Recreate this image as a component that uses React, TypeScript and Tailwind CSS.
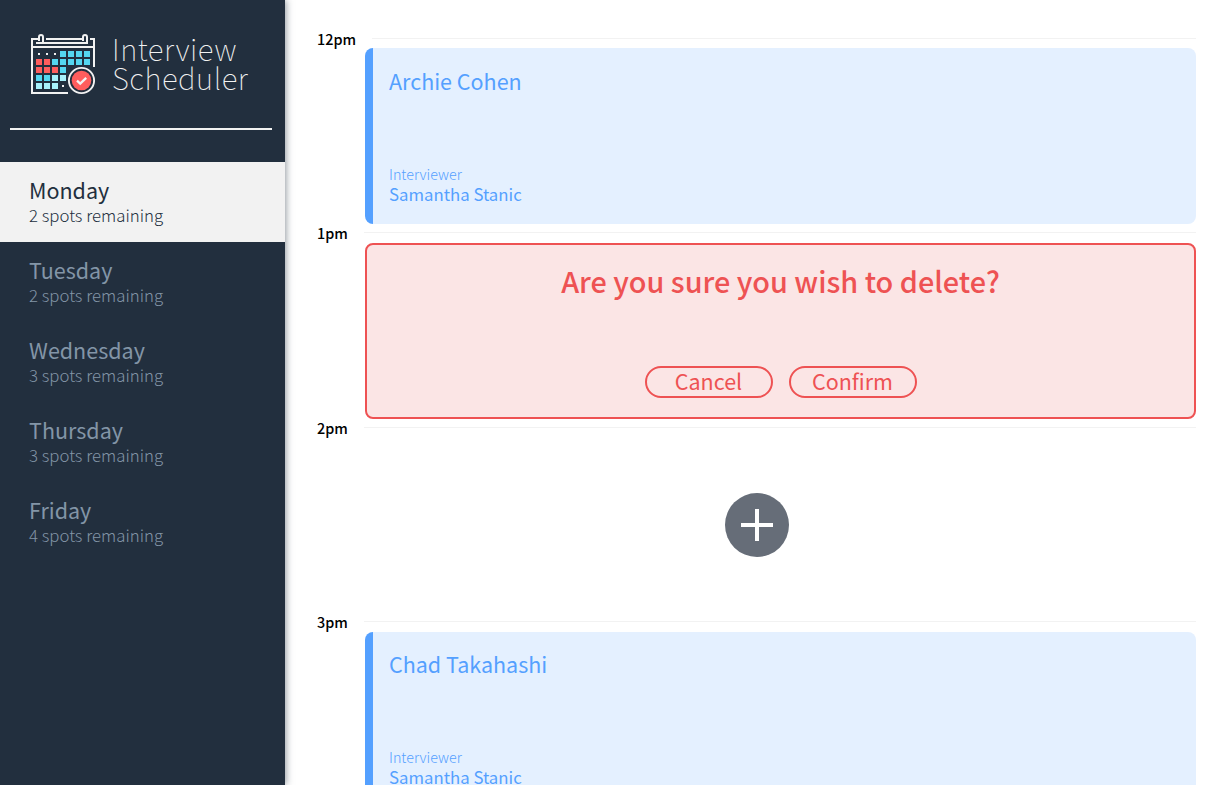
import React from "react";

const days = [
  { name: "Monday", spots: 2 },
  { name: "Tuesday", spots: 2 },
  { name: "Wednesday", spots: 3 },
  { name: "Thursday", spots: 3 },
  { name: "Friday", spots: 4 },
];

const CYAN = "#54d7f0";
const RED = "#ff5d5d";
const PALE = "#a8f1fb";

const cells: [number, number, string][] = [
  [3, 0, CYAN], [4, 0, CYAN], [5, 0, CYAN], [6, 0, CYAN],
  [0, 1, RED], [1, 1, RED], [2, 1, CYAN], [3, 1, CYAN], [4, 1, CYAN], [5, 1, CYAN], [6, 1, CYAN],
  [0, 2, RED], [1, 2, RED], [2, 2, RED], [3, 2, CYAN],
  [0, 3, CYAN], [1, 3, CYAN], [2, 3, PALE], [3, 3, PALE],
  [0, 4, PALE], [1, 4, PALE], [2, 4, PALE],
];

function Logo() {
  return (
    <svg width="66" height="62" viewBox="30 33 66 62" className="block shrink-0">
      <g fill="none" stroke="#f2f2f2" strokeWidth="2">
        <path d="M39 39H32V93H68M94 67V39H90M46 39H83M32 47H94M36 43H88" />
        <path d="M43 43V37a2 2 0 0 0-4 0V41M87 43V37a2 2 0 0 0-4 0V41" />
      </g>
      {cells.map(([c, r, fill]) => (
        <rect key={`${c}-${r}`} x={36 + c * 8} y={51 + r * 8} width="6" height="6" fill={fill} />
      ))}
      <g fill="#f2f2f2">
        <rect x="38" y="53" width="2" height="2" />
        <rect x="46" y="53" width="2" height="2" />
        <rect x="54" y="53" width="2" height="2" />
        <rect x="62" y="85" width="2" height="2" />
      </g>
      <circle cx="81.5" cy="80.5" r="12.6" fill="#222f3e" stroke="#f2f2f2" strokeWidth="1.9" />
      <circle cx="81.5" cy="80.5" r="9.8" fill={RED} />
      <path d="M77 80.6l3.2 3 6-5.8" fill="none" stroke="#f2f2f2" strokeWidth="2.3" />
    </svg>
  );
}

function Sidebar() {
  return (
    <aside className="relative z-10 h-full w-[285px] shrink-0 bg-[#222f3e] shadow-[1px_0_7px_0_rgba(34,47,62,0.5)]">
      <div className="flex h-[128px] pl-[30px] pt-[33px]">
        <Logo />
        <div className="ml-4 mt-px text-[29.5px] font-thin leading-[29px] tracking-[0.55px] text-[#f2f2f2]">
          <div>Interview</div>
          <div>Scheduler</div>
        </div>
      </div>
      <hr className="ml-[10px] h-0 w-[262px] border-0 border-t-2 border-[#f2f2f2]" />
      <nav className="mt-8">
        {days.map((d, i) => (
          <div
            key={d.name}
            className={
              i === 0
                ? "h-20 bg-[#f2f2f2] pl-[29px] pt-[14px] text-[#222f3e]"
                : "h-20 pl-[29px] pt-[14px] text-[#8395a7]"
            }
          >
            <div className="text-[21.5px] font-normal leading-[27px]">{d.name}</div>
            <div className="text-[16.8px] font-light leading-6">{d.spots} spots remaining</div>
          </div>
        ))}
      </nav>
    </aside>
  );
}

function Hour({ label, first }: { label: string; first?: boolean }) {
  return (
    <div className="flex h-[10px]">
      <span className={first ? "w-[55px] text-[14.4px] font-medium leading-[1px]" : "w-[47px] text-[14.4px] font-medium leading-[1px]"}>
        {label}
      </span>
      <div className="h-px flex-1 bg-[#f2f2f2]" />
    </div>
  );
}

function Booked({ student, interviewer, raised }: { student: string; interviewer: string; raised?: boolean }) {
  return (
    <div
      className={`ml-12 flex h-[176px] flex-col justify-between rounded-lg border-l-8 border-[#54a0ff] bg-[#e4f0ff] pl-4 text-[#54a0ff] ${
        raised ? "pb-[21px] pt-4" : "pb-5 pt-[17px]"
      }`}
    >
      <div className="text-[21.5px] leading-8">{student}</div>
      <div>
        <div className="text-[14.3px] font-light leading-5">Interviewer</div>
        <div className="text-[16.8px] leading-5">{interviewer}</div>
      </div>
    </div>
  );
}

function ConfirmDelete() {
  return (
    <div className="ml-12 flex h-[176px] flex-col items-center justify-between rounded-lg border-2 border-[#ee5253] bg-[#fbe5e5] pb-[19px] pt-4 text-[#ee5253]">
      <div className="text-[28.8px] font-medium leading-[40px]">Are you sure you wish to delete?</div>
      <div className="flex gap-4">
        {["Cancel", "Confirm"].map((t) => (
          <button key={t} className="flex h-8 w-32 items-center justify-center rounded-2xl border-2 border-[#ee5253] pb-[2px] text-[21.5px] leading-[26px]">
            {t}
          </button>
        ))}
      </div>
    </div>
  );
}

export default function App() {
  return (
    <div className="flex h-[785px] w-[1226px] overflow-hidden bg-white font-['Noto_Sans_CJK_JP',sans-serif]">
      <Sidebar />
      <main className="flex-1 pl-8 pr-[30px] pt-[38px]">
        <section className="h-[194px]">
          <Hour label="12pm" first />
          <Booked student="Archie Cohen" interviewer="Samantha Stanic" />
        </section>
        <section className="h-[195px]">
          <Hour label="1pm" />
          <div className="pt-px">
            <ConfirmDelete />
          </div>
        </section>
        <section className="h-[194px]">
          <Hour label="2pm" />
          <div className="flex h-[176px] items-center justify-center pl-px">
            <button className="flex size-16 items-center justify-center rounded-full bg-[#666d78]">
              <svg width="32" height="32" viewBox="0 0 32 32" fill="#fff">
                <path d="M14 0h4v14h14v4H18v14h-4V18H0v-4h14z" />
              </svg>
            </button>
          </div>
        </section>
        <section>
          <Hour label="3pm" />
          <div className="pt-px">
            <Booked student="Chad Takahashi" interviewer="Samantha Stanic" raised />
          </div>
        </section>
      </main>
    </div>
  );
}
